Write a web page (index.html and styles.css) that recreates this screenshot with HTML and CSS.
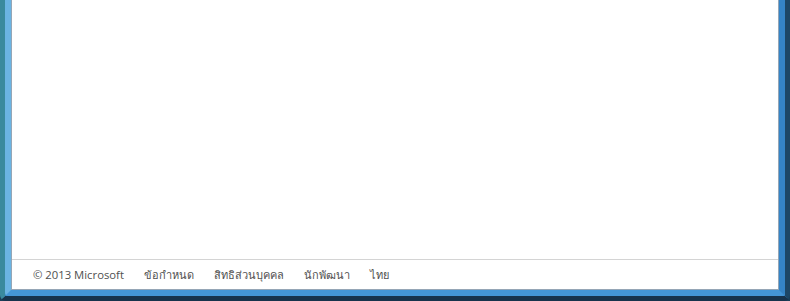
FILE: index.html
```html
<!DOCTYPE html>
<html lang="th">
<head>
    <meta charset="UTF-8">
    <meta name="viewport" content="width=device-width, initial-scale=1.0">
    <title>Microsoft</title>
    <link rel="stylesheet" href="styles.css">
</head>
<body>
    <div class="frame-outer">
        <div class="frame-inner">
            <div class="page">
                <div class="contenido"></div>
                <footer class="pie">
                    <span>© 2013 Microsoft</span>
                    <a href="#">ข้อกำหนด</a>
                    <a href="#">สิทธิส่วนบุคคล</a>
                    <a href="#">นักพัฒนา</a>
                    <a href="#">ไทย</a>
                </footer>
            </div>
        </div>
    </div>
</body>
</html>
```

FILE: styles.css
```css
html, body {
    margin: 0;
    padding: 0;
    height: 100%;
}

body {
    font-family: "Open Sans", "Noto Sans", sans-serif;
    background-color: #1b3e58;
}

.frame-outer {
    height: 100%;
    box-sizing: border-box;
    border-left: 5px solid #3a8a9e;
    border-right: 5px solid #1d4766;
    border-bottom: 5px solid #17334c;
    border-bottom-left-radius: 6px;
    border-bottom-right-radius: 6px;
    background-color: #3f8fcf;
}

.frame-inner {
    height: 100%;
    box-sizing: border-box;
    border-left: 6px solid #6bb4e3;
    border-right: 6px solid #3584c6;
    border-bottom: 6px solid #4496d6;
    border-bottom-left-radius: 4px;
    border-bottom-right-radius: 4px;
}

.page {
    height: 100%;
    box-sizing: border-box;
    background-color: white;
    border: 1px solid #95a6b6;
    border-top: none;
    display: flex;
    flex-direction: column;
}

.contenido {
    flex: 1;
}

.pie {
    height: 29px;
    border-top: 1px solid #d4d4d4;
    padding-left: 21px;
    display: flex;
    align-items: center;
    gap: 20px;
    font-size: 11.3px;
    color: #505050;
}

.pie a {
    font-size: 11px;
    color: #505050;
    text-decoration: none;
}
```
